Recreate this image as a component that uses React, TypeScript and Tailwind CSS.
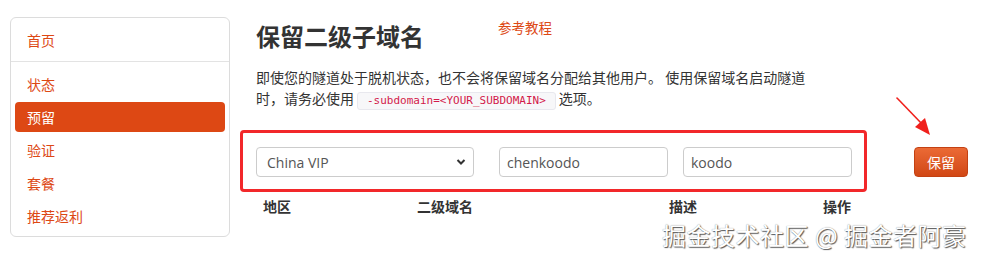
const navTop = ["首页"];
const navItems = ["状态", "预留", "验证", "套餐", "推荐返利"];

function Sidebar() {
  return (
    <div className="mt-[17px] ml-[10px] w-[220px] shrink-0 self-start rounded-[6px] border border-[#dcdcdc] bg-white">
      <ul className="px-[4px] pt-[7px] pb-[6px]">
        {navTop.map((t) => (
          <li key={t} className="flex h-[30px] items-center rounded-[4px] pl-[12px] text-[14px] text-[#dd4814]">
            {t}
          </li>
        ))}
      </ul>
      <div className="h-px bg-[#e3e3e3]" />
      <ul className="flex flex-col gap-[3px] px-[4px] pt-[7px] pb-[5px]">
        {navItems.map((t) => (
          <li
            key={t}
            className={
              t === "预留"
                ? "flex h-[30px] items-center rounded-[4px] bg-[#dd4814] pl-[12px] text-[14px] text-white"
                : "flex h-[30px] items-center rounded-[4px] pl-[12px] text-[14px] text-[#dd4814]"
            }
          >
            {t}
          </li>
        ))}
      </ul>
    </div>
  );
}

function Arrow() {
  return (
    <svg className="absolute left-[890px] top-[92px]" width="48" height="48" viewBox="0 0 48 48">
      <line x1="7" y1="6" x2="33" y2="33" stroke="#f0201c" strokeWidth="1.6" strokeLinecap="round" />
      <polygon points="40,43 25,35 35,26" fill="#f0201c" />
    </svg>
  );
}

export default function App() {
  return (
    <div className="relative h-[259px] w-[984px] overflow-hidden bg-white font-['Noto_Sans_CJK_SC',sans-serif] text-[#333]">
      <div className="flex">
        <Sidebar />

        <div className="ml-[26px] flex flex-col">
          <div className="flex items-start pt-[19px]">
            <h2 className="text-[24px] font-bold leading-[34px] text-[#333]">保留二级子域名</h2>
            <a className="ml-[74px] -mt-[2px] text-[13.5px] leading-[20px] text-[#dd4814]">参考教程</a>
          </div>

          <p className="mt-[14px] w-[556px] text-[14px] leading-[21px] text-[#333]">
            即使您的隧道处于脱机状态，也不会将保留域名分配给其他用户。 使用保留域名启动隧道时，请务必使用
            <code className="mx-[3px] inline-block rounded-[3px] border border-[#e8e8ee] bg-[#f7f7f9] px-[9px] font-['DejaVu_Sans_Mono',monospace] text-[11px] leading-[16px] text-[#d31a4a]">
              -subdomain=&lt;YOUR_SUBDOMAIN&gt;
            </code>
            选项。
          </p>

          <div className="mt-[20px] -ml-[16px] flex items-center">
            <div className="flex items-center rounded-[4px] border-[3px] border-[#f2282a] pt-[14px] pr-[12px] pb-[12px] pl-[13px]">
              <div className="relative h-[30px] w-[218px]">
                <select
                  defaultValue="cn"
                  className="h-full w-full appearance-none rounded-[4px] border border-[#cccccc] bg-white pl-[10px] font-['Open_Sans',sans-serif] text-[14px] text-[#555]"
                >
                  <option value="cn">China VIP</option>
                </select>
                <svg className="pointer-events-none absolute right-[8px] top-[11px]" width="10" height="8" viewBox="0 0 10 8">
                  <path d="M1.5 2 L5 5.5 L8.5 2" fill="none" stroke="#333" strokeWidth="2" />
                </svg>
              </div>
              <input
                defaultValue="chenkoodo"
                className="ml-[25px] h-[30px] w-[169px] rounded-[4px] border border-[#cccccc] bg-white pl-[7px] font-['Open_Sans',sans-serif] text-[14px] text-[#555] outline-none"
              />
              <input
                defaultValue="koodo"
                className="ml-[15px] h-[30px] w-[169px] rounded-[4px] border border-[#cccccc] bg-white pl-[7px] font-['Open_Sans',sans-serif] text-[14px] text-[#555] outline-none"
              />
            </div>
            <button className="ml-[47px] mt-[2px] h-[30px] w-[54px] rounded-[4px] border border-[#c34113] bg-gradient-to-b from-[#eb6a35] to-[#d14714] text-[14px] text-white">
              保留
            </button>
          </div>

          <div className="mt-[5px] flex text-[14px] font-bold leading-[18px] text-[#333]">
            <span className="w-[161px] pl-[7px]">地区</span>
            <span className="w-[252px]">二级域名</span>
            <span className="w-[154px]">描述</span>
            <span>操作</span>
          </div>
        </div>
      </div>

      <Arrow />

      <div className="absolute left-[662px] top-[222px] text-[24px] leading-[26px] tracking-[0.5px] text-white [text-shadow:1px_1px_1px_#555,0_0_1px_#888]">
        掘金技术社区 @ 掘金者阿豪
      </div>
    </div>
  );
}
